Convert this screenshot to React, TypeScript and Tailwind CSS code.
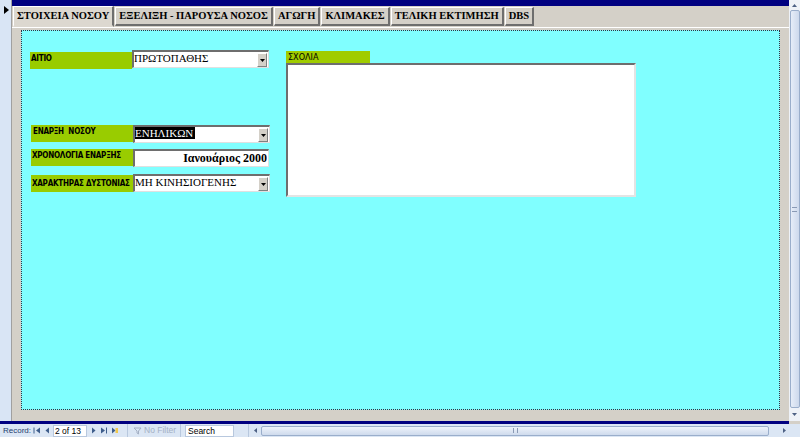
import React from "react";

const tabs = ["ΣΤΟΙΧΕΙΑ ΝΟΣΟΥ", "ΕΞΕΛΙΞΗ - ΠΑΡΟΥΣΑ ΝΟΣΟΣ", "ΑΓΩΓΗ", "ΚΛΙΜΑΚΕΣ", "ΤΕΛΙΚΗ ΕΚΤΙΜΗΣΗ", "DBS"];

function Label({ text, className = "" }: { text: string; className?: string }) {
  return (
    <div
      className={`w-[102px] shrink-0 h-[17px] bg-[#99cc00] pl-[1px] pt-[2px] text-[8px] tracking-[-0.25px] font-bold leading-[9px] text-black font-['DejaVu_Sans_Condensed','Liberation_Sans',sans-serif] whitespace-pre overflow-hidden ${className}`}
    >
      {text}
    </div>
  );
}

function DropBtn() {
  return (
    <div className="w-[10px] h-[14px] mt-[1px] mr-[1px] bg-[#d4d0c8] border-t border-l border-t-white border-l-white border-r border-b border-r-[#808080] border-b-[#808080] flex items-center justify-center">
      <svg width="5" height="3" viewBox="0 0 5 3">
        <path d="M0 0h5L2.5 3z" fill="#000" />
      </svg>
    </div>
  );
}

function Combo({ value, selected = false, className = "" }: { value: string; selected?: boolean; className?: string }) {
  return (
    <div
      className={`w-[137px] h-[18px] bg-white border-t-2 border-l-2 border-t-[#6e6e6e] border-l-[#6e6e6e] border-r border-b border-r-[#e0e0e0] border-b-[#e0e0e0] flex justify-between ${className}`}
    >
      <span
        className={`text-[11px] leading-[12px] h-[12px] font-['Liberation_Serif',serif] whitespace-nowrap ${
          selected ? "bg-black text-white pr-[2px]" : "text-black"
        }`}
      >
        {value}
      </span>
      <DropBtn />
    </div>
  );
}

function NavArrow({ dir, bar = false, star = false }: { dir: "l" | "r"; bar?: boolean; star?: boolean }) {
  return (
    <svg width="8" height="7" viewBox="0 0 8 7" className="shrink-0">
      {dir === "l" ? (
        <>
          {bar && <rect x="0.5" y="0.5" width="1" height="6" fill="#3f5e8c" />}
          <path d={bar ? "M7 0.5v6L3 3.5z" : "M6 0.5v6L2.5 3.5z"} fill="#3f5e8c" />
        </>
      ) : (
        <>
          <path d={bar ? "M1 0.5v6L5 3.5z" : "M2 0.5v6L5.5 3.5z"} fill="#3f5e8c" />
          {bar && <rect x="6" y="0.5" width="1" height="6" fill="#3f5e8c" />}
          {star && <rect x="5.5" y="1" width="2.5" height="5" fill="#f2c94c" />}
        </>
      )}
    </svg>
  );
}

export default function App() {
  return (
    <div className="w-[800px] h-[437px] flex flex-col overflow-hidden bg-[#d4d0c8] font-['Liberation_Sans',sans-serif]">
      <div className="flex h-[421px]">
        {/* record selector */}
        <div className="w-[12px] bg-[#d9e5f5] border-r border-r-[#a0a0a0] pt-[6px] pl-[4px]">
          <svg width="5" height="8" viewBox="0 0 5 8">
            <path d="M0 0l5 4-5 4z" fill="#000" />
          </svg>
        </div>

        <div className="flex-1 flex flex-col">
          <div className="h-[6px] bg-[#000080]" />
          {/* tabs */}
          <div className="h-[21px] flex items-end pl-[1px] gap-[1px]">
            {tabs.map((t, i) => (
              <div
                key={t}
                className={`${
                  i === 0 ? "h-[21px] bg-[#dcd8d0] px-[3px] pt-[3px]" : "h-[19px] mb-[1px] px-[3px] pt-[2px]"
                } border-t border-l border-t-white border-l-white border-r-2 border-r-[#6e6e6e] border-b-2 ${
                  i === 0 ? "border-b-[#dcd8d0]" : "border-b-[#6e6e6e]"
                } text-[10.5px] font-bold leading-[12px] text-black font-['Liberation_Serif',serif] whitespace-nowrap`}
              >
                {t}
              </div>
            ))}
          </div>
          {/* tab page */}
          <div className="flex-1 border-t border-t-white px-[9px] pt-[2px] pb-[11px]">
            <div className="h-full border border-dotted border-[#334] bg-[#80ffff] flex gap-[16px] pl-[8px] pt-[19px]">
              <div className="flex flex-col w-[240px]">
                <div className="flex items-start">
                  <Label text="ΑΙΤΙΟ" className="mt-[2px]" />
                  <Combo value="ΠΡΩΤΟΠΑΘΗΣ" />
                </div>
                <div className="flex items-start mt-[56px] pl-[1px]">
                  <Label text="ΕΝΑΡΞΗ  ΝΟΣΟΥ" className="pl-[2px]" />
                  <Combo value="ΕΝΗΛΙΚΩΝ" selected className="w-[136px]" />
                </div>
                <div className="flex items-start mt-[6px] pl-[1px]">
                  <Label text="ΧΡΟΝΟΛΟΓΙΑ ΕΝΑΡΞΗΣ" />
                  <div className="w-[136px] h-[18px] bg-white border-t-2 border-l-2 border-t-[#6e6e6e] border-l-[#6e6e6e] border-r border-b border-r-[#e0e0e0] border-b-[#e0e0e0] text-right pr-[1px] text-[12px] font-bold leading-[15px] font-['Liberation_Serif',serif] text-black whitespace-nowrap">
                    Ιανουάριος 2000
                  </div>
                </div>
                <div className="flex items-start mt-[7px] pl-[1px]">
                  <Label text="ΧΑΡΑΚΤΗΡΑΣ ΔΥΣΤΟΝΙΑΣ" className="mt-[1px] pt-[4px]" />
                  <Combo value="ΜΗ ΚΙΝΗΣΙΟΓΕΝΗΣ" className="w-[136px]" />
                </div>
              </div>
              <div className="flex flex-col pt-[1px]">
                <div className="w-[84px] h-[12px] bg-[#a0cc00] pl-[2px] text-[9px] leading-[12px] text-black font-['DejaVu_Sans_Condensed','Liberation_Sans',sans-serif]">
                  ΣΧΟΛΙΑ
                </div>
                <div className="w-[350px] h-[134px] bg-white border-t-2 border-l-2 border-t-[#6e6e6e] border-l-[#6e6e6e] border-r-2 border-b-2 border-r-[#e4e4e4] border-b-[#e4e4e4]" />
              </div>
            </div>
          </div>
        </div>

        {/* vertical scrollbar */}
        <div className="w-[11px] bg-[#eef2f8] flex flex-col items-center">
          <div className="h-[10px] flex items-center justify-center">
            <svg width="5" height="3" viewBox="0 0 5 3">
              <path d="M0 3h5L2.5 0z" fill="#4d6185" />
            </svg>
          </div>
          <div className="flex-1 w-[10px] rounded-[2px] border border-[#9aaecb] bg-gradient-to-r from-[#e6edf8] to-[#cdd9ec] flex items-center justify-center">
            <div className="w-[5px] h-[5px] border-t border-b border-[#8a9ab5]" />
          </div>
          <div className="h-[13px] flex items-center justify-center">
            <svg width="5" height="3" viewBox="0 0 5 3">
              <path d="M0 0h5L2.5 3z" fill="#4d6185" />
            </svg>
          </div>
        </div>
      </div>

      <div className="h-[3px] bg-[#000080] mr-[11px]" />

      {/* status bar */}
      <div className="h-[13px] flex items-center bg-[#dbe6f4] text-[8px] leading-[11px] text-[#1e3c6e] whitespace-nowrap font-['Liberation_Sans',sans-serif]">
        <span className="pl-[3px] w-[33px] shrink-0">Record:</span>
        <div className="flex items-center gap-[2px] w-[20px] shrink-0">
          <NavArrow dir="l" bar />
          <NavArrow dir="l" />
        </div>
        <div className="w-[34px] shrink-0 h-[12px] bg-white border border-[#b8c8de] text-black pl-[1px] leading-[10px] text-[8.5px]">2 of 13</div>
        <div className="flex items-center gap-[2px] pl-[3px] w-[40px] shrink-0">
          <NavArrow dir="r" />
          <NavArrow dir="r" bar />
          <NavArrow dir="r" star />
        </div>
        <div className="w-[54px] shrink-0 h-[13px] border-l border-r border-[#b8c8de] flex items-center pl-[6px] gap-[2px] text-[#a4b0c4] text-[8.5px]">
          <svg width="8" height="8" viewBox="0 0 8 8">
            <path d="M0 1h7L4.5 4v3l-1.5-1V4z" fill="none" stroke="#a4b0c4" strokeWidth="1" />
          </svg>
          <span>No Filter</span>
        </div>
        <div className="ml-[4px] w-[49px] shrink-0 h-[12px] bg-white border border-[#b8c8de] text-black pl-[2px] leading-[10px] text-[8.5px]">Search</div>
        <div className="ml-[14px] flex-1 h-[13px] flex items-center border-l border-[#b8c8de]">
          <div className="w-[12px] flex justify-center">
            <svg width="3" height="5" viewBox="0 0 3 5">
              <path d="M3 0v5L0 2.5z" fill="#4d6185" />
            </svg>
          </div>
          <div className="w-[508px] h-[10px] rounded-[2px] border border-[#9aaecb] bg-gradient-to-b from-[#eef3fa] to-[#cfdbed] flex items-center justify-center">
            <div className="w-[5px] h-[5px] border-l border-r border-[#8a9ab5]" />
          </div>
          <div className="flex-1 flex justify-end pr-[14px]">
            <svg width="3" height="5" viewBox="0 0 3 5">
              <path d="M0 0v5L3 2.5z" fill="#4d6185" />
            </svg>
          </div>
        </div>
      </div>
    </div>
  );
}
